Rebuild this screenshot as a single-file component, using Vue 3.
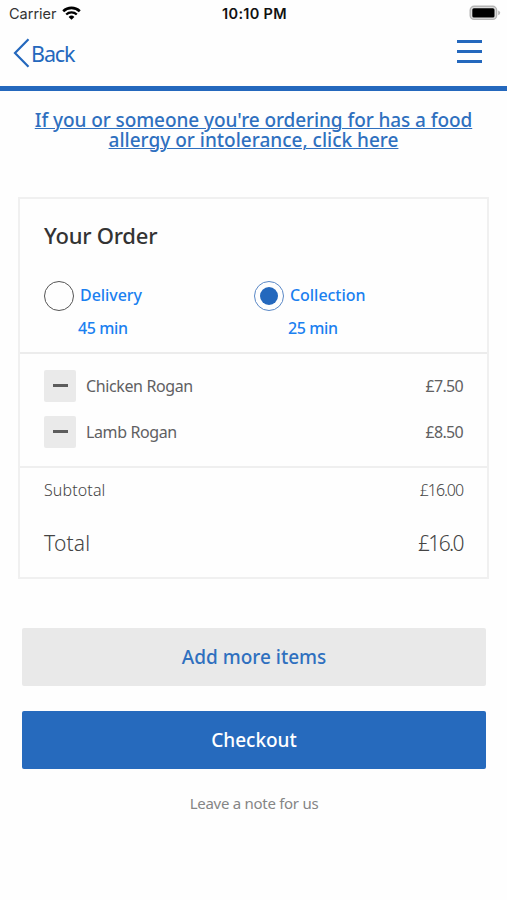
<script setup>
import { ref } from 'vue'

const selected = ref('Collection')
const methods = [
  { name: 'Delivery', time: '45 min' },
  { name: 'Collection', time: '25 min' },
]
const items = [
  { name: 'Chicken Rogan', price: '£7.50' },
  { name: 'Lamb Rogan', price: '£8.50' },
]
</script>

<template>
  <div class="screen">
    <div class="status">
      <div class="carrier">
        <span>Carrier</span>
        <svg class="wifi" width="19" height="14" viewBox="0 0 19 14">
          <path d="M1.2 5.2A12 12 0 0 1 17.8 5.2" fill="none" stroke="#000" stroke-width="2.6" />
          <path d="M4.2 8.5A7.6 7.6 0 0 1 14.8 8.5" fill="none" stroke="#000" stroke-width="2.3" />
          <path d="M9.5 13.8L6.6 10.9A4.1 4.1 0 0 1 12.4 10.9Z" />
        </svg>
      </div>
      <span class="clock">10:10 PM</span>
      <svg class="battery" width="32" height="16" viewBox="0 0 32 16">
        <rect x="1.2" y="1.2" width="26.4" height="13.2" rx="4" fill="#ddd" stroke="#b5b5b5" stroke-width="1.4" />
        <rect x="3.3" y="3.2" width="22.2" height="9.4" rx="1.6" />
        <path d="M29.2 5.4Q31.2 6.2 31.2 7.8Q31.2 9.4 29.2 10.2Z" fill="#b5b5b5" />
      </svg>
    </div>

    <header class="header">
      <a class="back">
        <svg width="17" height="30" viewBox="0 0 17 30">
          <path d="M15.5 1.2L2 15L15.5 28.8" fill="none" stroke="#2468bd" stroke-width="2.2" />
        </svg>
        <span>Back</span>
      </a>
      <div class="burger"><i></i><i></i><i></i></div>
    </header>

    <a class="allergy">
      <span class="first">If you or someone you're ordering for has a food</span>
      <span>allergy or intolerance, click here</span>
    </a>

    <section class="card">
      <div class="order">
        <h1>Your Order</h1>
        <div class="methods">
          <div v-for="m in methods" :key="m.name" class="method" @click="selected = m.name">
            <span class="radio" :class="{ on: selected === m.name }"></span>
            <div class="labels">
              <span class="name">{{ m.name }}</span>
              <span class="time">{{ m.time }}</span>
            </div>
          </div>
        </div>
      </div>
      <div class="items">
        <div v-for="i in items" :key="i.name" class="item">
          <button class="minus"><i></i></button>
          <span class="title">{{ i.name }}</span>
          <span class="price">{{ i.price }}</span>
        </div>
      </div>
      <div class="totals">
        <div class="subtotal"><span>Subtotal</span><span class="amount">£16.00</span></div>
        <div class="total"><span>Total</span><span class="amount">£16.0</span></div>
      </div>
    </section>

    <div class="actions">
      <button class="btn add">Add more items</button>
      <button class="btn checkout">Checkout</button>
      <a class="note">Leave a note for us</a>
    </div>
  </div>
</template>

<style>
body {
  background: #fefefe;
}
</style>

<style scoped>
.screen {
  width: 507px;
  height: 900px;
  overflow: hidden;
  background: #fefefe;
  font-family: "Noto Sans", sans-serif;
  color: #606062;
  white-space: nowrap;
}
button {
  border: 0;
  padding: 0;
  font-family: inherit;
}
.status {
  display: grid;
  grid-template-columns: 1fr auto 1fr;
  height: 28px;
  padding: 0 7px 0 9px;
  align-items: center;
  font-family: Inter, sans-serif;
  font-size: 14.5px;
  line-height: 18px;
  color: #111;
}
.carrier {
  display: flex;
  align-items: center;
  gap: 5px;
  margin-top: -1px;
  color: #333;
}
.wifi {
  margin-top: -2px;
}
.clock {
  margin-top: -1px;
  font-weight: 600;
  letter-spacing: 0.3px;
}
.battery {
  justify-self: end;
  margin: -2px -1px 0 0;
}
.header {
  display: flex;
  justify-content: space-between;
  height: 58px;
  padding: 0 25px 0 13px;
  border-bottom: 5px solid #2468bd;
}
.back {
  display: flex;
  height: 30px;
  margin-top: 10px;
  align-items: center;
  font-size: 21.5px;
  letter-spacing: -1.1px;
  color: #2468bd;
}
.back span {
  margin: 0 0 0 1px;
}
.burger {
  display: flex;
  flex-direction: column;
  gap: 7px;
  margin-top: 12px;
}
.burger i {
  width: 25px;
  height: 3px;
  background: #2468bd;
}
.allergy {
  display: flex;
  flex-direction: column;
  align-items: center;
  margin-top: 19px;
  font-size: 19px;
  font-weight: 500;
  line-height: 20px;
  color: #2f70bf;
  text-decoration: underline;
  text-decoration-thickness: 1px;
  text-underline-offset: 1px;
}
.first {
  letter-spacing: -0.08px;
}
.card {
  width: 467px;
  margin: 47px 0 0 18px;
  border: 2px solid #f0f0f0;
}
.order {
  height: 153px;
  padding: 0 24px;
  border-bottom: 2px solid #ececec;
}
h1 {
  margin: 0;
  padding-top: 20px;
  font-size: 22px;
  line-height: 32px;
  font-weight: 500;
  letter-spacing: -0.25px;
  color: #333;
}
.methods {
  display: grid;
  grid-template-columns: 210px 1fr;
  padding-top: 28px;
}
.method {
  display: flex;
  gap: 4px;
}
.radio {
  display: grid;
  place-items: center;
  box-sizing: border-box;
  width: 30px;
  height: 30px;
  margin-top: 2px;
  border: 1.5px solid #555;
  border-radius: 50%;
}
.radio.on {
  border-color: #5a88c6;
}
.radio.on::after {
  content: "";
  width: 18px;
  height: 18px;
  border-radius: 50%;
  background: #2468bd;
}
.labels {
  display: flex;
  flex-direction: column;
  font-size: 16px;
  line-height: 33px;
  font-weight: 500;
  color: #1a80f0;
}
.name {
  padding-left: 2px;
  letter-spacing: -0.05px;
}
.time {
  letter-spacing: -0.4px;
}
.items {
  display: flex;
  flex-direction: column;
  gap: 14px;
  padding: 16px 24px 18px;
  border-bottom: 2px solid #efefef;
}
.item {
  display: flex;
  height: 32px;
  align-items: center;
  font-size: 16px;
}
.minus {
  display: grid;
  place-items: center;
  width: 32px;
  height: 32px;
  margin-right: 10px;
  border-radius: 2px;
  background: #eaeaea;
}
.minus i {
  width: 15px;
  height: 3px;
  margin-bottom: 1px;
  background: #5c5c5c;
}
.title {
  letter-spacing: -0.38px;
}
.price {
  margin-left: auto;
  letter-spacing: -0.7px;
}
.totals {
  padding: 5px 24px 15px;
  font-weight: 300;
  color: #444;
}
.subtotal,
.total {
  display: flex;
  justify-content: space-between;
}
.subtotal {
  font-size: 16px;
  line-height: 34px;
  letter-spacing: 0.12px;
}
.subtotal .amount {
  letter-spacing: -1.05px;
}
.total {
  padding-top: 17px;
  font-size: 21px;
  line-height: 38px;
  letter-spacing: 0.2px;
}
.total .amount {
  letter-spacing: -1.6px;
}
.actions {
  display: flex;
  flex-direction: column;
  padding: 49px 21px 0 22px;
}
.btn {
  height: 58px;
  padding-bottom: 1px;
  border-radius: 2px;
  font-size: 19px;
  font-weight: 500;
}
.add {
  background: #e9e9e9;
  color: #2f70bf;
}
.checkout {
  margin-top: 25px;
  background: #266abd;
  color: #fff;
}
.note {
  margin-top: 20px;
  text-align: center;
  font-size: 15px;
  line-height: 28px;
  letter-spacing: -0.28px;
  color: #858585;
}
</style>
